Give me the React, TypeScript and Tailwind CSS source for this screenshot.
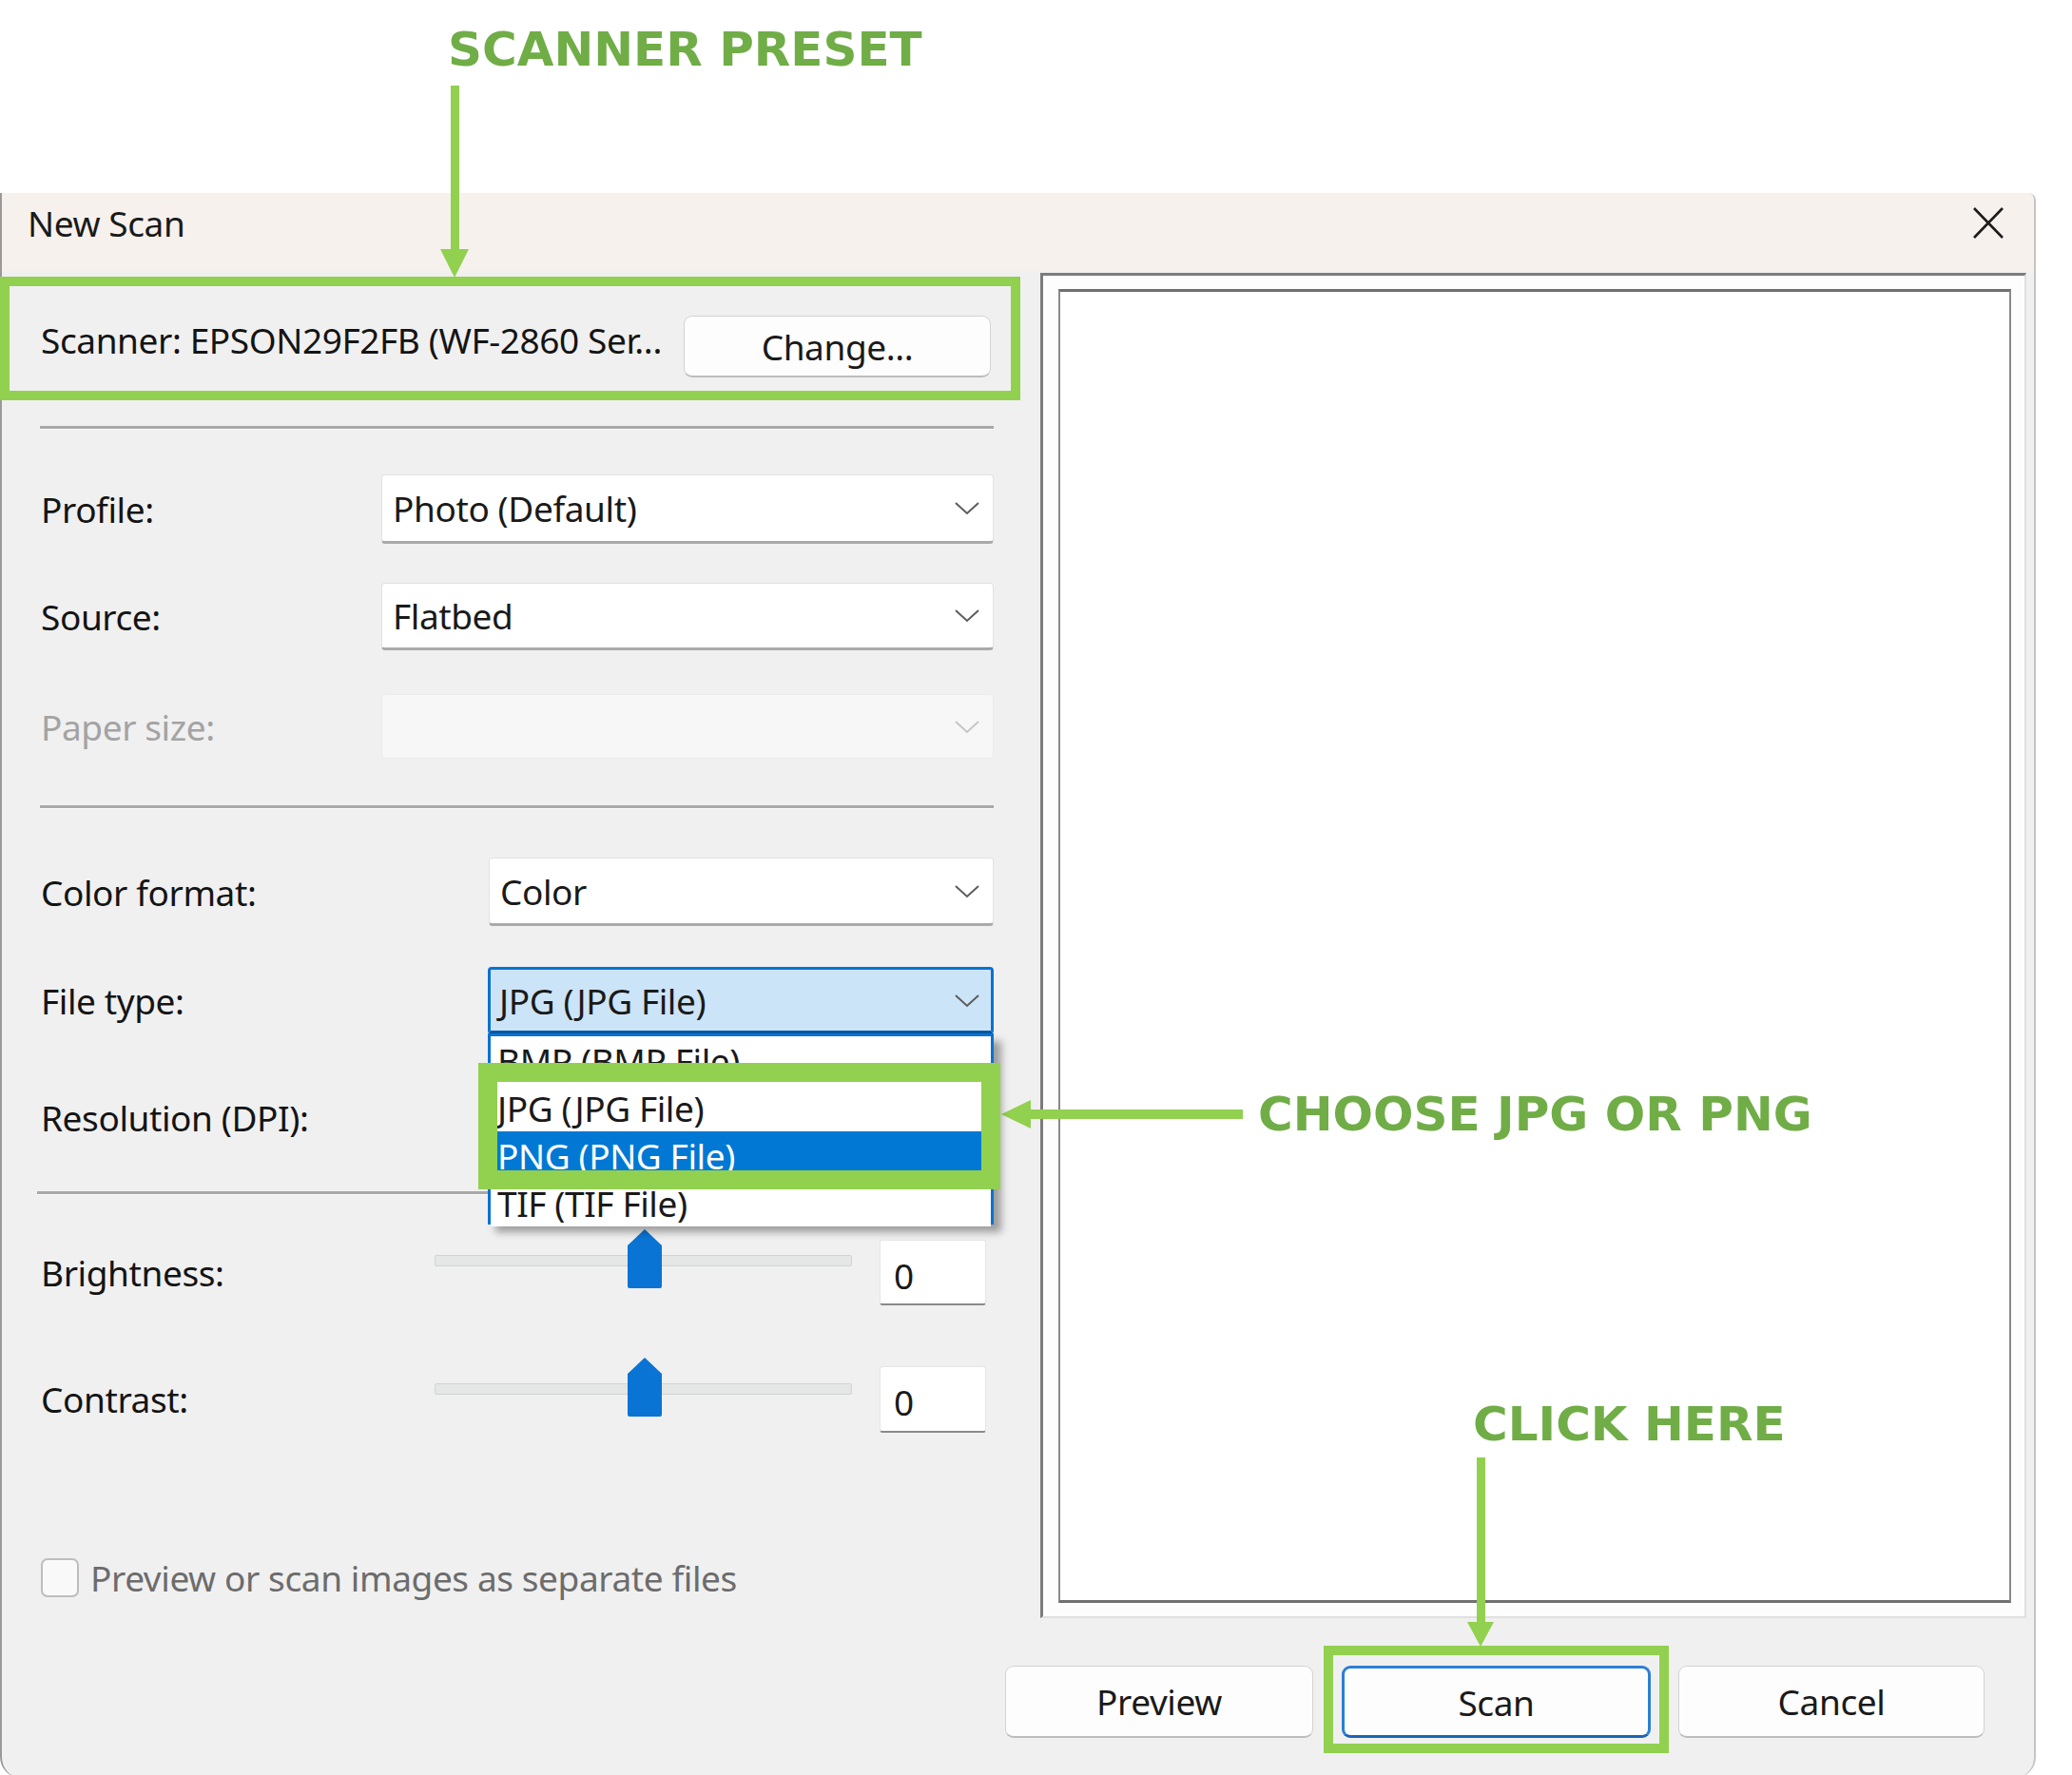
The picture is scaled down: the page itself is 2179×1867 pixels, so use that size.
import React from "react";

const green = "border-[#92d050]";

function Chevron({ muted }: { muted?: boolean }) {
  return (
    <svg width="28" height="15" viewBox="0 0 28 15" className="shrink-0">
      <polyline
        points="2,2 14,13 26,2"
        fill="none"
        stroke={muted ? "#c6c6c6" : "#5c5c5c"}
        strokeWidth="2"
      />
    </svg>
  );
}

type SelectProps = {
  value?: string;
  className: string;
  disabled?: boolean;
  focused?: boolean;
  children?: React.ReactNode;
};

function Select({ value, className, disabled, focused, children }: SelectProps) {
  const look = focused
    ? "bg-[#cce4f7] border-[3px] border-[#0a72cf] border-b-[4px] border-b-[#0059a8] pl-[9px] pr-[11px]"
    : disabled
    ? "bg-[#f7f7f7] border border-[#ececec] pl-[11px] pr-[13px]"
    : "bg-white border border-[#e2e2e2] border-b-[3px] border-b-[#aaaaaa] pl-[11px] pr-[13px]";
  return (
    <div className={`relative flex items-center justify-between rounded-[4px] ${look} ${className}`}>
      <span className="leading-none text-[#1a1a1a]">{value}</span>
      <Chevron muted={disabled} />
      {children}
    </div>
  );
}

function Label({ text, width, muted }: { text: string; width: string; muted?: boolean }) {
  return (
    <span className={`shrink-0 leading-none ${width} ${muted ? "text-[#a3a3a3]" : "text-[#141414]"}`}>
      {text}
    </span>
  );
}

function Separator({ className = "" }: { className?: string }) {
  return <div className={`h-[3px] bg-[#a9a9a9] shadow-[0_1px_0_#fafafa] ${className}`} />;
}

function Slider() {
  return (
    <div className="relative w-[439px] h-[62px] shrink-0">
      <div className="absolute left-0 right-0 top-[27px] h-[12px] rounded-[2px] bg-[#e5e7e7] border border-[#d2d4d4]" />
      <svg className="absolute left-[203px] top-0" width="36" height="62" viewBox="0 0 36 62">
        <path d="M18 0 L36 17 V60 Q36 62 34 62 H2 Q0 62 0 60 V17 Z" fill="#0a74d4" />
      </svg>
    </div>
  );
}

function ValueBox({ className }: { className: string }) {
  return (
    <div
      className={`w-[112px] shrink-0 rounded-[3px] bg-white border border-[#e6e6e6] border-b-2 border-b-[#8a8a8a] pl-[14px] pt-[9px] ${className}`}
    >
      <span className="leading-none text-[#1a1a1a]">0</span>
    </div>
  );
}

function DialogButton({
  text,
  primary,
  size,
}: {
  text: string;
  primary?: boolean;
  size: string;
}) {
  const look = primary
    ? "border-[3px] border-[#2c7fd6] border-b-[#1b63b5]"
    : "border border-[#d3d3d3] border-b-2 border-b-[#bdbdbd]";
  return (
    <div className={`${size} rounded-[9px] bg-[#fdfdfd] flex items-center justify-center ${look}`}>
      <span className="leading-none text-[#1a1a1a]">{text}</span>
    </div>
  );
}

function ListItem({ text, selected }: { text: string; selected?: boolean }) {
  return (
    <div
      className={`h-[50px] flex items-center pl-[7px] ${
        selected ? "bg-[#0078d4] text-white" : "bg-white text-[#1a1a1a]"
      }`}
    >
      <span className="leading-none">{text}</span>
    </div>
  );
}

export default function App() {
  return (
    <div className="relative w-[2179px] h-[1867px] overflow-hidden bg-white font-['Noto_Sans','Segoe_UI',sans-serif] text-[37px] tracking-[-0.4px]">
      {/* annotation heading */}
      <div className="h-[203px] pl-[471px] pt-[27px]">
        <span className="font-['DejaVu_Sans',sans-serif] font-bold text-[50px] leading-none tracking-normal text-[#70ad47]">
          SCANNER PRESET
        </span>
      </div>

      {/* dialog window */}
      <div className="w-[2141px] h-[1667px] flex flex-col overflow-hidden rounded-tr-[8px] rounded-b-[22px] border-l-2 border-l-[#9a9a9a] border-r-2 border-r-[#c4c4c4] bg-[#f0f0f0]">
        <div className="h-[82px] shrink-0 flex items-start justify-between bg-[#f6f1ed]">
          <span className="ml-[27px] mt-[13px] leading-none text-[#1a1a1a]">New Scan</span>
          <svg className="mt-[15px] mr-[31px]" width="34" height="33" viewBox="0 0 34 33">
            <path d="M2 1 L32 32 M32 1 L2 32" stroke="#1c1c1c" strokeWidth="2.6" fill="none" />
          </svg>
        </div>

        <div className="h-[1417px] shrink-0 flex items-start">
          {/* settings column */}
          <div className="w-[1092px] shrink-0 pl-[41px] pr-[49px] flex flex-col">
            <div className="mt-[47px] h-[65px] flex items-start justify-between">
              <span className="mt-[7px] leading-none text-[#141414]">
                Scanner: EPSON29F2FB (WF-2860 Ser...
              </span>
              <div className="mr-[3px]">
                <DialogButton text="Change..." size="w-[323px] h-[65px]" />
              </div>
            </div>

            <Separator className="mt-[51px] -ml-px" />

            <div className="mt-[48px] flex items-center">
              <Label text="Profile:" width="w-[358px]" />
              <Select value="Photo (Default)" className="flex-1 h-[73px]" />
            </div>
            <div className="mt-[41px] flex items-center">
              <Label text="Source:" width="w-[358px]" />
              <Select value="Flatbed" className="flex-1 h-[71px]" />
            </div>
            <div className="mt-[46px] flex items-center">
              <Label text="Paper size:" width="w-[358px]" muted />
              <Select className="flex-1 h-[68px]" disabled />
            </div>

            <Separator className="mt-[49px] -ml-px" />

            <div className="mt-[52px] flex items-center">
              <Label text="Color format:" width="w-[471px]" />
              <Select value="Color" className="flex-1 h-[72px]" />
            </div>
            <div className="mt-[43px] flex items-center">
              <Label text="File type:" width="w-[470px]" />
              <Select value="JPG (JPG File)" className="flex-1 h-[71px]" focused>
                <div className="absolute left-[-3px] right-[-3px] top-[67px] z-10 h-[201px] border-[3px] border-[#0a72cf] border-b-[4px] bg-white shadow-[8px_8px_8px_rgba(0,0,0,0.35)]">
                  <ListItem text="BMP (BMP File)" />
                  <ListItem text="JPG (JPG File)" />
                  <ListItem text="PNG (PNG File)" selected />
                  <ListItem text="TIF (TIF File)" />
                </div>
              </Select>
            </div>
            <div className="mt-[52px] h-[70px] flex items-center">
              <Label text="Resolution (DPI):" width="w-[471px]" />
              <Select className="flex-1 h-[70px]" />
            </div>

            <Separator className="mt-[43px] -ml-[4px]" />

            <div className="mt-[37px] h-[80px] flex items-start">
              <span className="mt-[27px] w-[414px] shrink-0 leading-none text-[#141414]">Brightness:</span>
              <Slider />
              <ValueBox className="ml-[29px] mt-[11px] h-[69px]" />
            </div>
            <div className="mt-[55px] h-[79px] flex items-start">
              <span className="mt-[25px] w-[414px] shrink-0 leading-none text-[#141414]">Contrast:</span>
              <Slider />
              <ValueBox className="ml-[29px] mt-[9px] h-[70px]" />
            </div>

            <div className="mt-[132px] h-[41px] flex items-center gap-[12px]">
              <div className="w-[40px] h-[41px] rounded-[7px] border-2 border-[#bdbdbd] bg-[#f9f9f9]" />
              <span className="leading-none text-[#6c6c6c]">Preview or scan images as separate files</span>
            </div>
          </div>

          {/* preview area */}
          <div className="mt-[2px] w-[1037px] h-[1415px] shrink-0 border-t-[3px] border-l-[3px] border-t-[#7c7c7c] border-l-[#7c7c7c] border-r-2 border-b-2 border-r-[#e0e0e0] border-b-[#e0e0e0] bg-[#fdfdfd] pl-[16px] pt-[14px] pr-[14px] pb-[14px]">
            <div className="h-full border-2 border-[#8a8a8a] border-t-[3px] border-b-[3px] border-t-[#6f6f6f] border-b-[#6f6f6f] bg-white" />
          </div>
        </div>

        <div className="mt-[50px] flex justify-end pr-[52px]">
          <DialogButton text="Preview" size="w-[324px] h-[76px]" />
          <div className="ml-[30px]">
            <DialogButton text="Scan" size="w-[325px] h-[76px]" primary />
          </div>
          <div className="ml-[29px]">
            <DialogButton text="Cancel" size="w-[322px] h-[76px]" />
          </div>
        </div>
      </div>

      {/* annotations */}
      <svg className="absolute left-[463px] top-[90px]" width="30" height="202" viewBox="0 0 30 202">
        <rect x="11" y="0" width="9" height="174" fill="#92d050" />
        <polygon points="0,172 30,172 15,202" fill="#92d050" />
      </svg>
      <div className={`absolute left-0 top-[291px] w-[1073px] h-[130px] border-[10px] ${green}`} />

      <div className={`absolute z-20 left-[503px] top-[1118px] w-[549px] h-[133px] border-[20px] ${green}`} />
      <svg className="absolute left-[1053px] top-[1157px]" width="254" height="30" viewBox="0 0 254 30">
        <polygon points="0,15 31,0 31,30" fill="#92d050" />
        <rect x="29" y="10" width="225" height="10" fill="#92d050" />
      </svg>
      <span className="absolute left-[1323px] top-[1147px] font-['DejaVu_Sans',sans-serif] font-bold text-[50px] leading-none tracking-normal text-[#70ad47]">
        CHOOSE JPG OR PNG
      </span>

      <span className="absolute left-[1549px] top-[1473px] font-['DejaVu_Sans',sans-serif] font-bold text-[50px] leading-none tracking-normal text-[#70ad47]">
        CLICK HERE
      </span>
      <svg className="absolute left-[1543px] top-[1533px]" width="28" height="199" viewBox="0 0 28 199">
        <rect x="10" y="0" width="9" height="175" fill="#92d050" />
        <polygon points="0,173 28,173 14,199" fill="#92d050" />
      </svg>
      <div className={`absolute left-[1392px] top-[1731px] w-[363px] h-[113px] border-[10px] ${green}`} />
    </div>
  );
}
